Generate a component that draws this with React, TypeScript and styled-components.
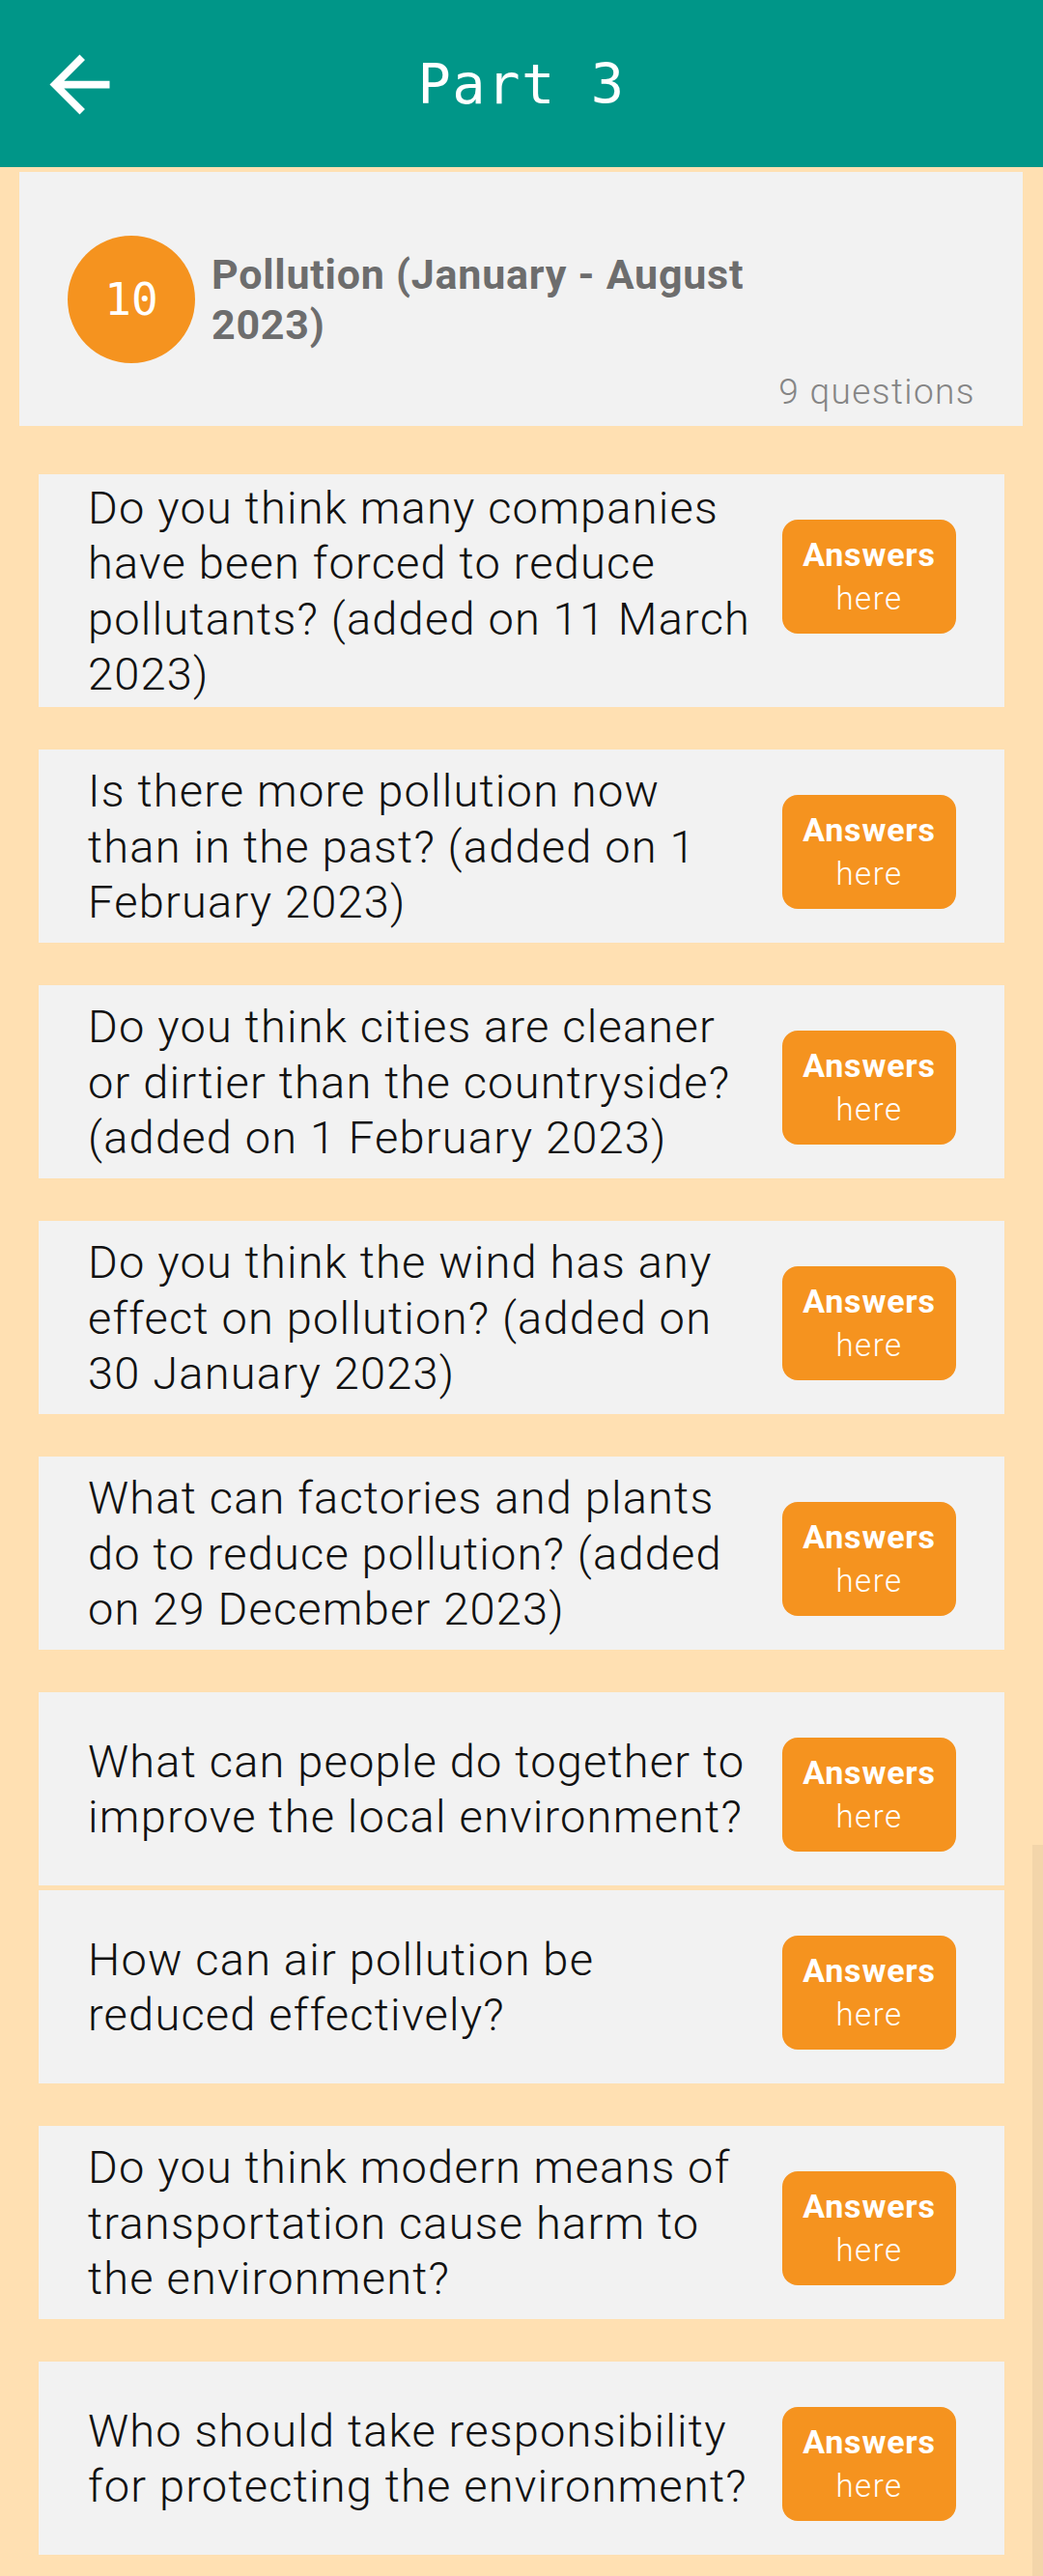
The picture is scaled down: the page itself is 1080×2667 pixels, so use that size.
import React from 'react'
import styled, { createGlobalStyle } from 'styled-components'

const GlobalStyle = createGlobalStyle`
  body {
    margin: 0;
    background: #ffe0b2;
    font-family: Roboto, "Noto Sans", sans-serif;
  }
`

interface Question {
  lines: string[]
  tight?: boolean
}

const questions: Question[] = [
  { lines: ['Do you think many companies', 'have been forced to reduce', 'pollutants? (added on 11 March', '2023)'] },
  { lines: ['Is there more pollution now', 'than in the past? (added on 1', 'February 2023)'] },
  { lines: ['Do you think cities are cleaner', 'or dirtier than the countryside?', '(added on 1 February 2023)'] },
  { lines: ['Do you think the wind has any', 'effect on pollution? (added on', '30 January 2023)'] },
  { lines: ['What can factories and plants', 'do to reduce pollution? (added', 'on 29 December 2023)'] },
  { lines: ['What can people do together to', 'improve the local environment?'] },
  { lines: ['How can air pollution be', 'reduced effectively?'], tight: true },
  { lines: ['Do you think modern means of', 'transportation cause harm to', 'the environment?'] },
  { lines: ['Who should take responsibility', 'for protecting the environment?'] },
]

const App = () => {
  return (
    <Page>
      <GlobalStyle />
      <Header>
        <BackButton aria-label="Back">
          <svg width="93" height="93" viewBox="0 0 24 24" fill="#ffffff">
            <path d="M20 11H7.83l5.59-5.59L12 4l-8 8 8 8 1.41-1.41L7.83 13H20v-2z" />
          </svg>
        </BackButton>
        <Title>Part 3</Title>
        <div />
      </Header>

      <TopicCard>
        <TopicRow>
          <NumberBadge>10</NumberBadge>
          <TopicTitle>Pollution (January - August 2023)</TopicTitle>
        </TopicRow>
        <QuestionCount>9 questions</QuestionCount>
      </TopicCard>

      <List>
        {questions.map((q, i) => (
          <QuestionCard key={i} tight={q.tight}>
            <QuestionText>
              {q.lines.map((line, j) => (
                <React.Fragment key={j}>
                  {j > 0 && <br />}
                  {line}
                </React.Fragment>
              ))}
            </QuestionText>
            <AnswerButton>
              <strong>Answers</strong>
              <span>here</span>
            </AnswerButton>
          </QuestionCard>
        ))}
      </List>

      <ScrollThumb />
    </Page>
  )
}

export default App

const Page = styled.div`
  position: relative;
  min-height: 2667px;
  background: #ffe0b2;
  overflow: hidden;
`

const Header = styled.header`
  height: 173px;
  background: #009688;
  display: grid;
  grid-template-columns: 1fr auto 1fr;
  align-items: center;
`

const BackButton = styled.div`
  display: flex;
  align-items: center;
  padding-left: 36px;
  margin-top: 1px;
`

const Title = styled.div`
  font-family: "DejaVu Sans Mono", "Liberation Mono", monospace;
  font-size: 57px;
  color: #ffffff;
  letter-spacing: 1.5px;
`

const TopicCard = styled.section`
  margin: 5px 21px 0 20px;
  background: #f2f2f2;
  padding: 66px 49px 15px 50px;
`

const TopicRow = styled.div`
  display: flex;
  align-items: center;
  gap: 17px;
`

const NumberBadge = styled.div`
  flex: none;
  width: 132px;
  height: 132px;
  border-radius: 50%;
  background: #f5931f;
  color: #ffffff;
  display: flex;
  align-items: center;
  justify-content: center;
  font-family: "DejaVu Sans Mono", "Liberation Mono", monospace;
  font-size: 46px;
`

const TopicTitle = styled.div`
  width: 600px;
  font-size: 43px;
  line-height: 52px;
  font-weight: 700;
  letter-spacing: 0.75px;
  color: #6d6d6d;
`

const QuestionCount = styled.div`
  margin-top: 9px;
  text-align: right;
  font-size: 37px;
  line-height: 41px;
  font-weight: 300;
  letter-spacing: 1.4px;
  color: #858585;
`

const List = styled.div`
  display: flex;
  flex-direction: column;
  margin: 50px 40px 0;
`

const QuestionCard = styled.div<{ tight?: boolean }>`
  display: flex;
  align-items: center;
  gap: 8px;
  min-height: 200px;
  box-sizing: border-box;
  margin-top: ${(p) => (p.tight ? '5px' : '44px')};
  padding: 6px 50px 6px 51px;
  background: #f2f2f2;

  &:first-child {
    margin-top: 0;
  }
`

const QuestionText = styled.div`
  flex: 1;
  font-size: 47px;
  line-height: 57.3px;
  font-weight: 300;
  letter-spacing: 1.2px;
  color: #111111;
  white-space: nowrap;
`

const AnswerButton = styled.div`
  flex: none;
  align-self: flex-start;
  margin-top: 41px;
  width: 180px;
  height: 118px;
  border-radius: 16px;
  background: #f5931f;
  color: #ffffff;
  display: flex;
  flex-direction: column;
  align-items: center;
  justify-content: center;

  strong {
    font-size: 34px;
    line-height: 46px;
    font-weight: 700;
    letter-spacing: 0.8px;
  }

  span {
    font-size: 33px;
    line-height: 46px;
    font-weight: 300;
    letter-spacing: 1.5px;
  }
`

const ScrollThumb = styled.div`
  position: absolute;
  right: 0;
  top: 1910px;
  width: 11px;
  height: 757px;
  background: #f3d5aa;
`
